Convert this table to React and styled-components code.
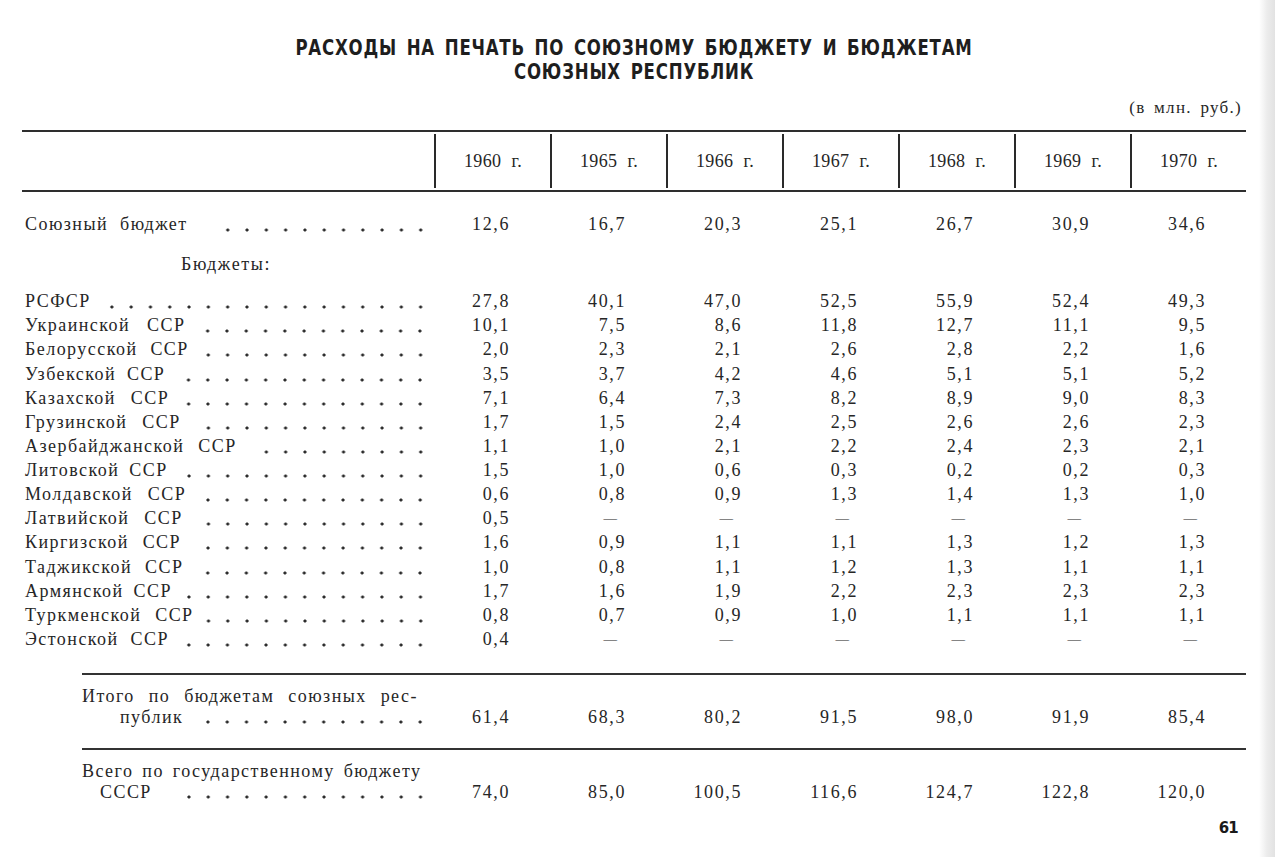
import styled, { createGlobalStyle } from "styled-components";

const years = ["1960 г.", "1965 г.", "1966 г.", "1967 г.", "1968 г.", "1969 г.", "1970 г."];

const union = ["12,6", "16,7", "20,3", "25,1", "26,7", "30,9", "34,6"];

// [name, word spacing, ...values]
const republics = [
  ["РСФСР", 4, "27,8", "40,1", "47,0", "52,5", "55,9", "52,4", "49,3"],
  ["Украинской ССР", 11, "10,1", "7,5", "8,6", "11,8", "12,7", "11,1", "9,5"],
  ["Белорусской ССР", 7, "2,0", "2,3", "2,1", "2,6", "2,8", "2,2", "1,6"],
  ["Узбекской ССР", 5, "3,5", "3,7", "4,2", "4,6", "5,1", "5,1", "5,2"],
  ["Казахской ССР", 9, "7,1", "6,4", "7,3", "8,2", "8,9", "9,0", "8,3"],
  ["Грузинской ССР", 9, "1,7", "1,5", "2,4", "2,5", "2,6", "2,6", "2,3"],
  ["Азербайджанской ССР", 8, "1,1", "1,0", "2,1", "2,2", "2,4", "2,3", "2,1"],
  ["Литовской ССР", 4, "1,5", "1,0", "0,6", "0,3", "0,2", "0,2", "0,3"],
  ["Молдавской ССР", 9, "0,6", "0,8", "0,9", "1,3", "1,4", "1,3", "1,0"],
  ["Латвийской ССР", 9, "0,5", "—", "—", "—", "—", "—", "—"],
  ["Киргизской ССР", 8, "1,6", "0,9", "1,1", "1,1", "1,3", "1,2", "1,3"],
  ["Таджикской ССР", 7, "1,0", "0,8", "1,1", "1,2", "1,3", "1,1", "1,1"],
  ["Армянской ССР", 4, "1,7", "1,6", "1,9", "2,2", "2,3", "2,3", "2,3"],
  ["Туркменской ССР", 8, "0,8", "0,7", "0,9", "1,0", "1,1", "1,1", "1,1"],
  ["Эстонской ССР", 6, "0,4", "—", "—", "—", "—", "—", "—"],
];

const republicsTotal = ["61,4", "68,3", "80,2", "91,5", "98,0", "91,9", "85,4"];
const stateTotal = ["74,0", "85,0", "100,5", "116,6", "124,7", "122,8", "120,0"];

const GlobalStyle = createGlobalStyle`
  html, body {
    margin: 0;
    padding: 0;
    background: #fff;
  }
  body {
    font-family: "Liberation Serif", serif;
    color: #262626;
  }
`;

const Page = styled.div`
  width: 1275px;
  height: 857px;
  box-sizing: border-box;
  padding: 36px 29px 0 22px;
  background: linear-gradient(to right, #fff 0, #fff 1259px, #ececec 1267px, #e2e2e2 1275px);
  overflow: hidden;
`;

/* the book face is a tall condensed grotesque; DejaVu is squeezed to match */
const Title = styled.h1`
  margin: 0;
  text-align: center;
  font-family: "DejaVu Sans", sans-serif;
  font-weight: 700;
  font-size: 21px;
  line-height: 24px;
  letter-spacing: 1px;
  word-spacing: 4px;
  color: #1e1e1e;
  transform: scaleX(0.79);
`;

const Units = styled.div`
  margin-top: 12px;
  text-align: right;
  padding-right: 4px;
  font-size: 17px;
  line-height: 24px;
  letter-spacing: 1.3px;
  word-spacing: 3px;
`;

const Table = styled.div`
  margin-top: 10px;
  width: 1224px;
`;

const grid = `
  display: grid;
  grid-template-columns: 412px repeat(7, 116px);
`;

const HeaderRow = styled.div`
  ${grid}
  height: 58px;
  border-top: 2px solid #2e2e2e;
  border-bottom: 2px solid #2e2e2e;
  align-items: center;
`;

const YearCell = styled.div`
  height: 54px;
  display: flex;
  align-items: center;
  justify-content: center;
  border-left: 2px solid #2a2a2a;
  font-size: 18px;
  letter-spacing: 0.4px;
  word-spacing: 5px;
`;

const Row = styled.div`
  ${grid}
  height: ${(p) => p.$h || 24.14}px;
  margin-top: ${(p) => p.$top || 0}px;
  align-items: ${(p) => (p.$end ? "end" : "center")};
  font-size: 18px;
  line-height: ${(p) => p.$lh || 24}px;
`;

const LabelCell = styled.div`
  display: flex;
  align-items: center;
  padding-left: 3px;
  padding-right: 4px;
  letter-spacing: 1.45px;
  word-spacing: ${(p) => p.$ws ?? 4}px;
  white-space: nowrap;
`;

const Leader = styled.span`
  flex: 1;
  align-self: stretch;
  margin-left: ${(p) => p.$gap || 12}px;
  background-image: radial-gradient(circle, #2a2a2a 1.3px, transparent 1.8px);
  background-size: 19.3px 6px;
  background-repeat: repeat-x;
  background-position: right 0 bottom 3px;
`;

const Value = styled.div`
  text-align: right;
  padding-right: 40px;
  letter-spacing: 1.6px;
`;

const Dash = styled.div`
  text-align: right;
  padding-right: 48px;
  font-size: 15px;
  transform: scaleX(0.9);
`;

const Section = styled.div`
  ${grid}
  height: 24px;
  margin-top: 16px;
  align-items: center;
  font-size: 18px;
  line-height: 24px;
`;

const SectionLabel = styled.div`
  padding-left: 159px;
  letter-spacing: 1.6px;
`;

const Rule = styled.div`
  margin-left: 60px;
  margin-top: ${(p) => p.$top}px;
  border-top: 2px solid #333;
`;

const Multi = styled.div`
  padding-left: 60px;
  padding-right: 4px;
  letter-spacing: 1.45px;
  word-spacing: ${(p) => p.$ws || 4}px;
  white-space: nowrap;
`;

const Line = styled.div`
  display: flex;
  padding-left: ${(p) => p.$indent || 0}px;
`;

const PageNumber = styled.div`
  margin-top: 16px;
  text-align: right;
  padding-right: 8px;
  font-family: "DejaVu Sans", sans-serif;
  font-weight: 700;
  font-size: 15px;
  line-height: 18px;
  letter-spacing: -0.8px;
  color: #1a1a1a;
`;

const Cells = ({ values }) =>
  values.map((v, i) => (v === "—" ? <Dash key={i}>—</Dash> : <Value key={i}>{v}</Value>));

export default function App() {
  return (
    <Page>
      <GlobalStyle />
      <Title>
        РАСХОДЫ НА ПЕЧАТЬ ПО СОЮЗНОМУ БЮДЖЕТУ И БЮДЖЕТАМ
        <br />
        СОЮЗНЫХ РЕСПУБЛИК
      </Title>
      <Units>(в млн. руб.)</Units>
      <Table>
        <HeaderRow>
          <div />
          {years.map((y) => (
            <YearCell key={y}>{y}</YearCell>
          ))}
        </HeaderRow>

        <Row $top={20}>
          <LabelCell $ws={6}>
            Союзный бюджет
            <Leader $gap={24} />
          </LabelCell>
          <Cells values={union} />
        </Row>

        <Section>
          <SectionLabel>Бюджеты:</SectionLabel>
        </Section>

        {republics.map(([name, ws, ...vals], i) => (
          <Row key={name} $top={i === 0 ? 13 : 0}>
            <LabelCell $ws={ws}>
              {name}
              <Leader />
            </LabelCell>
            <Cells values={vals} />
          </Row>
        ))}

        <Rule $top={22} />
        <Row $top={9} $h={44} $lh={21} $end>
          <Multi $ws={8}>
            <div>Итого по бюджетам союзных рес-</div>
            <Line $indent={38}>
              публик
              <Leader $gap={18} />
            </Line>
          </Multi>
          <Cells values={republicsTotal} />
        </Row>

        <Rule $top={20} />
        <Row $top={9} $h={44} $lh={21} $end>
          <Multi $ws={3}>
            <div>Всего по государственному бюджету</div>
            <Line $indent={18}>
              СССР
              <Leader $gap={30} />
            </Line>
          </Multi>
          <Cells values={stateTotal} />
        </Row>
      </Table>
      <PageNumber>61</PageNumber>
    </Page>
  );
}
